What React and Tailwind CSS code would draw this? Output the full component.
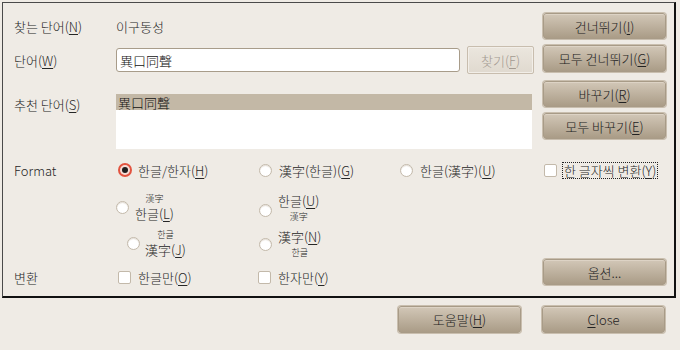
import React from "react";

const FONT = { fontFamily: '"Noto Sans CJK KR", "DejaVu Sans", sans-serif' };

function Btn({ children, className = "" }) {
  return (
    <div
      className={`flex items-center justify-center whitespace-nowrap rounded-[3px] border border-[#a89b87] bg-linear-to-b from-[#d2c7b7] to-[#aa9c87] text-[13px] text-[#222] shadow-[inset_0_1px_0_#ddd3c5,0_0_0_1px_#c9beae] ${className}`}
    >
      {children}
    </div>
  );
}

function Radio({ checked = false, className = "" }) {
  if (checked) {
    return (
      <span className={`flex h-[14px] w-[14px] shrink-0 items-center justify-center rounded-full bg-[#e2533f] ${className}`}>
        <span className="flex h-[10px] w-[10px] items-center justify-center rounded-full bg-[#f6dcd6]">
          <span className="h-[6px] w-[6px] rounded-full bg-[#1e1e1e]" />
        </span>
      </span>
    );
  }
  return (
    <span
      className={`block h-[13px] w-[13px] shrink-0 rounded-full border border-[#c3b9aa] bg-white shadow-[inset_0_1px_1px_#e4ded6] ${className}`}
    />
  );
}

function Check({ className = "" }) {
  return (
    <span
      className={`block h-[13px] w-[13px] shrink-0 rounded-[2px] border border-[#c3b9aa] bg-white ${className}`}
    />
  );
}

export default function App() {
  return (
    <div className="h-[350px] w-[680px] overflow-hidden whitespace-nowrap bg-[#efebe5] text-[13px] font-light leading-none text-[#262626]" style={FONT}>
      {/* frame */}
      <div className="ml-[2px] mt-[2px] flex h-[296px] w-[674px] flex-col border-b-2 border-l border-r-2 border-t border-b-[#111] border-l-[#4a4a4a] border-r-[#111] border-t-[#4a4a4a] pl-[11px] pr-[8px]">
        {/* section 1 */}
        <div className="flex">
          <div className="flex-1 pt-[10px]">
            <div className="flex h-[26px] items-center">
              <div className="w-[102px]">
                찾는 단어(<u className="underline-offset-2">N</u>)
              </div>
              <div>이구동성</div>
            </div>
            <div className="mt-[7px] flex h-[28px] items-center">
              <div className="w-[102px]">
                단어(<u className="underline-offset-2">W</u>)
              </div>
              <div className="flex h-[24px] w-[344px] items-center rounded-[3px] border border-[#a89c8a] bg-white pl-[3px] text-[#111]">
                異口同聲
              </div>
              <div className="ml-[7px] flex h-[28px] w-[67px] items-center justify-center rounded-[2px] border border-[#c8bdae] bg-linear-to-b from-[#ebe6de] to-[#e0d9cf] text-[#a39a91] shadow-[inset_0_0_0_1px_#f2eee8]">
                찾기(<u className="underline-offset-2">F</u>)
              </div>
            </div>
            <div className="mt-[20px] flex">
              <div className="w-[102px] pt-[4px]">
                추천 단어(<u className="underline-offset-2">S</u>)
              </div>
              <div className="h-[55px] w-[416px] bg-white">
                <div className="flex h-[16px] items-center bg-[#c3b8a6] pl-[2px] text-[#111]">異口同聲</div>
              </div>
            </div>
          </div>
          <div className="w-[123px] pt-[10px]">
            <Btn className="h-[26px]">
              건너뛰기(<u className="underline-offset-2">I</u>)
            </Btn>
            <Btn className="mt-[6px] h-[27px]">
              모두 건너뛰기(<u className="underline-offset-2">G</u>)
            </Btn>
            <Btn className="mt-[9px] h-[26px]">
              바꾸기(<u className="underline-offset-2">R</u>)
            </Btn>
            <Btn className="mt-[6px] h-[26px]">
              모두 바꾸기(<u className="underline-offset-2">E</u>)
            </Btn>
          </div>
        </div>

        {/* format row */}
        <div className="mt-[11px] flex h-[20px] items-center">
          <div className="w-[102px]">Format</div>
          <div className="flex w-[143px] items-center pl-[2px]">
            <Radio checked />
            <span className="ml-[6px]">
              한글/한자(<u className="underline-offset-2">H</u>)
            </span>
          </div>
          <div className="flex w-[141px] items-center">
            <Radio />
            <span className="ml-[7px]">
              漢字(한글)(<u className="underline-offset-2">G</u>)
            </span>
          </div>
          <div className="flex w-[142px] items-center">
            <Radio />
            <span className="ml-[7px]">
              한글(漢字)(<u className="underline-offset-2">U</u>)
            </span>
          </div>
          <div className="flex items-center pl-[2px]">
            <Check />
            <span className="ml-[5px] border border-dotted border-[#222] px-[1px] py-[1px]">
              한 글자씩 변환(<u className="underline-offset-2">Y</u>)
            </span>
          </div>
        </div>

        {/* section 3 */}
        <div className="flex flex-1">
          <div className="flex-1">
            {/* row E */}
            <div className="mt-[11px] flex h-[32px] items-center">
              <div className="w-[102px]" />
              <div className="flex w-[143px] items-center">
                <Radio />
                <div className="ml-[6px] flex flex-col items-center">
                  <span className="text-[9px]">漢字</span>
                  <span className="mt-[4px]">
                    한글(<u className="underline-offset-2">L</u>)
                  </span>
                </div>
              </div>
              <div className="flex items-center">
                <Radio className="mt-[6px]" />
                <div className="ml-[6px] flex flex-col items-center">
                  <span>
                    한글(<u className="underline-offset-2">U</u>)
                  </span>
                  <span className="mt-[5px] text-[9px]">漢字</span>
                </div>
              </div>
            </div>
            {/* row F */}
            <div className="mt-[5px] flex h-[30px] items-center">
              <div className="w-[102px]" />
              <div className="flex w-[143px] items-center pl-[11px]">
                <Radio />
                <div className="ml-[5px] flex flex-col items-center">
                  <span className="text-[9px]">한글</span>
                  <span className="mt-[4px]">
                    漢字(<u className="underline-offset-2">J</u>)
                  </span>
                </div>
              </div>
              <div className="flex items-center">
                <Radio className="mt-[2px]" />
                <div className="ml-[6px] flex flex-col items-center">
                  <span>
                    漢字(<u className="underline-offset-2">N</u>)
                  </span>
                  <span className="mt-[5px] text-[9px]">한글</span>
                </div>
              </div>
            </div>
            {/* row G */}
            <div className="mt-[9px] flex h-[20px] items-center">
              <div className="w-[102px]">변환</div>
              <div className="flex w-[142px] items-center pl-[2px]">
                <Check />
                <span className="ml-[7px]">
                  한글만(<u className="underline-offset-2">O</u>)
                </span>
              </div>
              <div className="flex items-center">
                <Check />
                <span className="ml-[7px]">
                  한자만(<u className="underline-offset-2">Y</u>)
                </span>
              </div>
            </div>
          </div>
          <div className="flex w-[123px] flex-col justify-end pb-[11px]">
            <Btn className="h-[26px]">옵션...</Btn>
          </div>
        </div>
      </div>

      {/* bottom buttons */}
      <div className="mt-[8px] flex justify-end gap-[21px] pr-[15px]">
        <Btn className="h-[27px] w-[123px]">
          도움말(<u className="underline-offset-2">H</u>)
        </Btn>
        <Btn className="h-[27px] w-[123px]">
          <u className="underline-offset-2">C</u>lose
        </Btn>
      </div>
    </div>
  );
}
